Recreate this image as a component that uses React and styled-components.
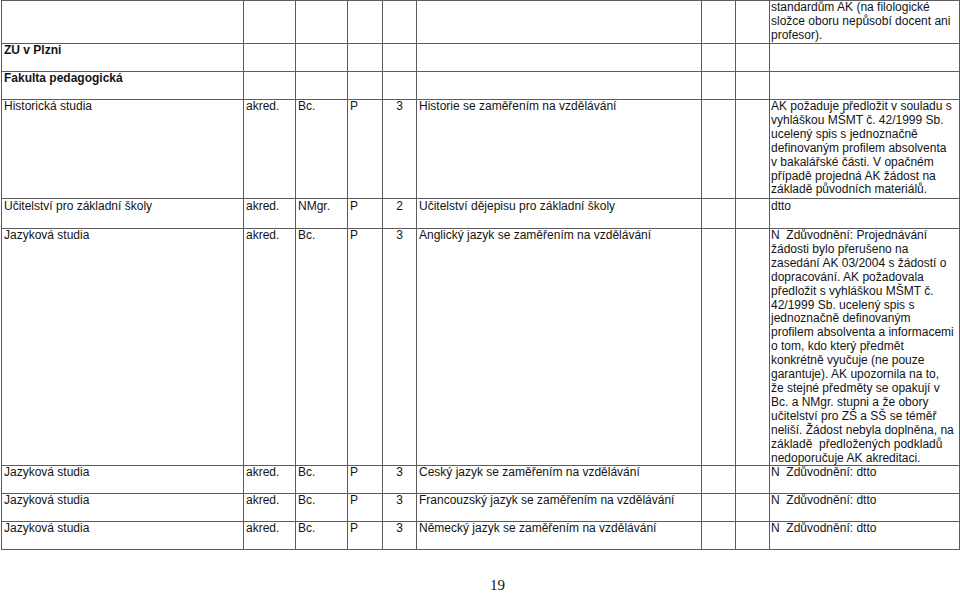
import React from 'react'
import styled, { createGlobalStyle } from 'styled-components';

const GlobalStyle = createGlobalStyle`
	html, body {
		margin: 0;
		padding: 0;
		background: #fff;
	}
	body {
		font-family: "Liberation Sans", Arial, sans-serif;
		color: #141414;
		overflow: hidden;
	}
`

const rows = [
	{ h: 43, cells: ['', '', '', '', '', '', '', '', ['standardům AK (na filologické', 'složce oboru nepůsobí docent ani', 'profesor).']] },
	{ h: 28, bold: true, cells: ['ZU v Plzni', '', '', '', '', '', '', '', ''] },
	{ h: 28, bold: true, cells: ['Fakulta pedagogická', '', '', '', '', '', '', '', ''] },
	{ h: 99, cells: ['Historická studia', 'akred.', 'Bc.', 'P', '3', 'Historie se zaměřením na vzdělávání', '', '', [
		'AK požaduje předložit v souladu s',
		'vyhláškou MŠMT č. 42/1999 Sb.',
		'ucelený spis s jednoznačně',
		'definovaným profilem absolventa',
		'v bakalářské části. V opačném',
		'případě projedná AK žádost na',
		'základě původních materiálů.',
	]] },
	{ h: 30, pad: 1, cells: ['Učitelství pro základní školy', 'akred.', 'NMgr.', 'P', '2', 'Učitelství dějepisu pro základní školy', '', '', 'dtto'] },
	{ h: 237, cells: ['Jazyková studia', 'akred.', 'Bc.', 'P', '3', 'Anglický jazyk se zaměřením na vzdělávání', '', '', [
		'N  Zdůvodnění: Projednávání',
		'žádosti bylo přerušeno na',
		'zasedání AK 03/2004 s žádostí o',
		'dopracování. AK požadovala',
		'předložit s vyhláškou MŠMT č.',
		'42/1999 Sb. ucelený spis s',
		'jednoznačně definovaným',
		'profilem absolventa a informacemi',
		'o tom, kdo který předmět',
		'konkrétně vyučuje (ne pouze',
		'garantuje). AK upozornila na to,',
		'že stejné předměty se opakují v',
		'Bc. a NMgr. stupni a že obory',
		'učitelství pro ZŠ a SŠ se téměř',
		'neliší. Žádost nebyla doplněna, na',
		'základě  předložených podkladů',
		'nedoporučuje AK akreditaci.',
	]] },
	{ h: 28, cells: ['Jazyková studia', 'akred.', 'Bc.', 'P', '3', 'Český jazyk se zaměřením na vzdělávání', '', '', 'N  Zdůvodnění: dtto'] },
	{ h: 28, cells: ['Jazyková studia', 'akred.', 'Bc.', 'P', '3', 'Francouzský jazyk se zaměřením na vzdělávání', '', '', 'N  Zdůvodnění: dtto'] },
	{ h: 28, cells: ['Jazyková studia', 'akred.', 'Bc.', 'P', '3', 'Německý jazyk se zaměřením na vzdělávání', '', '', 'N  Zdůvodnění: dtto'] },
]

function App() {
	return (
		<Page>
			<GlobalStyle />
			<Table>
				{rows.map((row, i) => (
					<Row key={i} $h={row.h}>
						{row.cells.map((cell, j) => (
							<Cell key={j} $center={j === 4} $bold={row.bold} $pad={row.pad || 0} $last={j === 8}>
								{Array.isArray(cell)
									? cell.map((line, k) => <Line key={k}>{line}</Line>)
									: <Line>{cell}</Line>}
							</Cell>
						))}
					</Row>
				))}
			</Table>
			<PageNumber>19</PageNumber>
		</Page>
	);
}

const Page = styled.div`
	width: 960px;
	height: 593px;
	overflow: hidden;
`
const Table = styled.div`
	margin-left: 1px;
	width: 959px;
	box-sizing: border-box;
	border-left: 1px solid #5c5c5c;
	border-top: 1px solid #5c5c5c;
`
const Row = styled.div`
	display: grid;
	grid-template-columns: 242px 52px 52px 35px 34px 285px 34px 34px 190px;
	min-height: ${p => p.$h}px;
	box-sizing: border-box;
	border-bottom: 1px solid #5c5c5c;
`
const Cell = styled.div`
	box-sizing: border-box;
	border-right: 1px solid #5c5c5c;
	padding: ${p => p.$pad}px ${p => (p.$center ? 0 : 1)}px 0 ${p => (p.$last ? 1 : p.$center ? 0 : 2)}px;
	text-align: ${p => (p.$center ? 'center' : 'left')};
	font-size: 12px;
	line-height: 13.9px;
	font-weight: ${p => (p.$bold ? 700 : 400)};
	white-space: pre;
	overflow: hidden;
`
const Line = styled.div`
	min-height: 13.9px;
`
const PageNumber = styled.div`
	margin-top: 30px;
	padding-left: 35px;
	text-align: center;
	font-family: "Liberation Serif", "Times New Roman", serif;
	font-size: 15px;
	line-height: 10px;
	color: #111;
`

export default App;
